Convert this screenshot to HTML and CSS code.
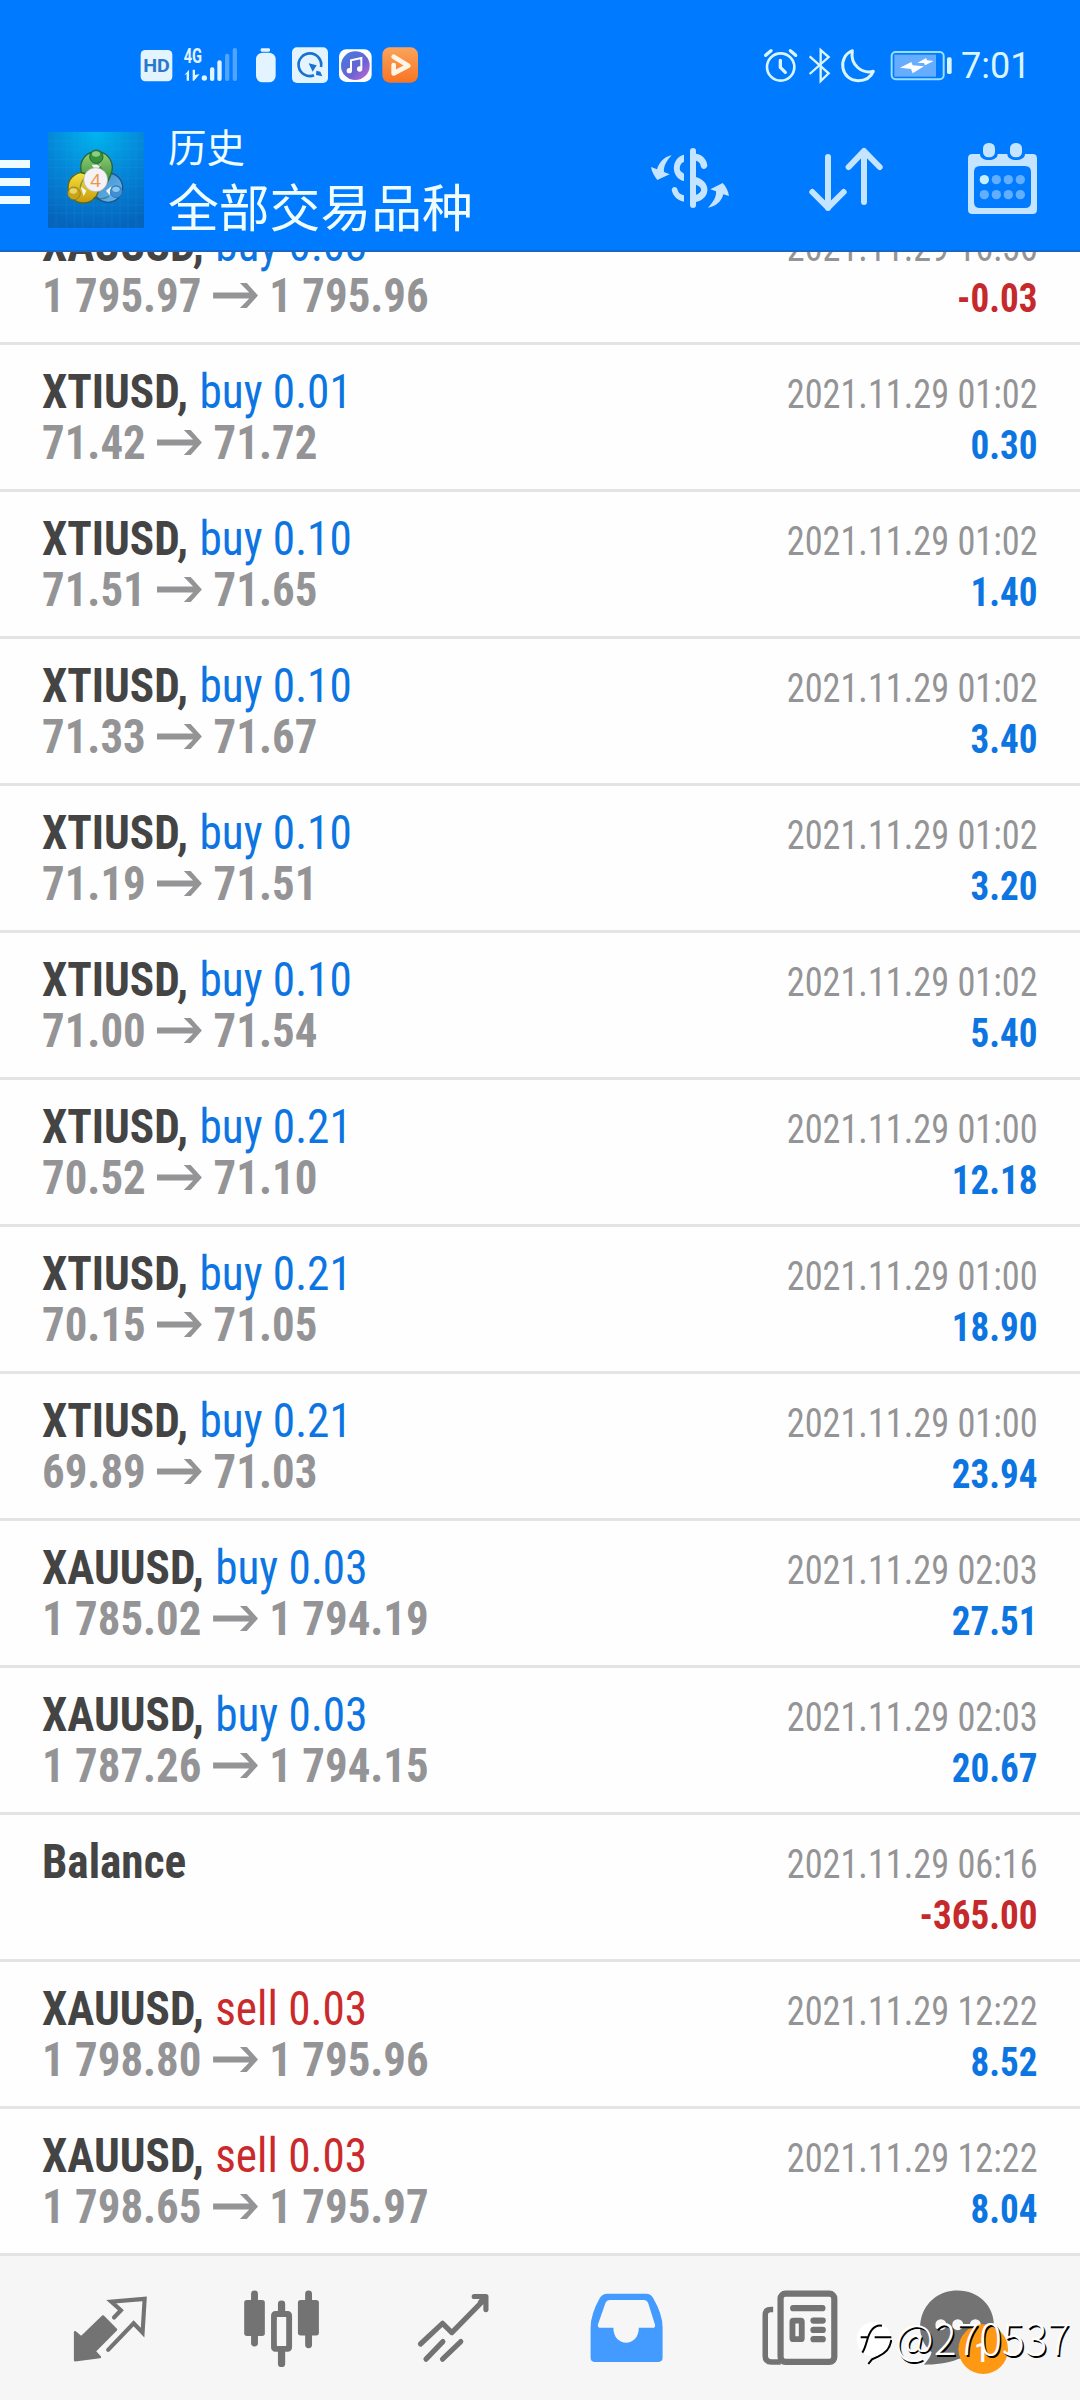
FILE: index.html
```html
<!DOCTYPE html>
<html lang="zh-CN">
<head>
<meta charset="utf-8">
<title>历史</title>
<link rel="stylesheet" href="styles.css">
</head>
<body>
<header class="header">
  <div class="status">
    <div class="status-group status-left">
      <svg width="42" height="70" viewBox="45 0 126 210"><rect x="62" y="60" width="95" height="94" rx="14" fill="#e4f4ff"/><text class="hd" x="109.500" y="126" text-anchor="middle" textLength="80" lengthAdjust="spacingAndGlyphs">HD</text></svg>
      <svg width="70" height="70" viewBox="171 0 210 210" fill="#e4f4ff"><text class="net" x="191" y="98" textLength="55" lengthAdjust="spacingAndGlyphs">4G</text><path d="M193 136l14-17v33h-7v-20zM218 119h7v16l14-3-17 20h-4z"/><circle cx="253" cy="144" r="8"/><rect x="270" y="112" width="13" height="41" rx="6"/><rect x="292" y="91" width="13" height="62" rx="6"/><rect x="315" y="71" width="13" height="82" rx="6" opacity=".35"/><rect x="338" y="54" width="13" height="99" rx="6" opacity=".35"/></svg>
      <svg width="37" height="70" viewBox="381 0 111 210" fill="#e4f4ff"><rect x="422" y="55" width="28" height="10" rx="4"/><rect x="408" y="68" width="59" height="89" rx="20"/></svg>
      <svg width="49" height="70" viewBox="492 0 147 210"><rect x="516" y="52" width="108" height="107" rx="15" fill="#e4f4ff"/><path d="M582 136A34 34 0 1 1 603 111" fill="none" stroke="#1972d2" stroke-width="8"/><path d="M566 100l24 6-12 19zM589 122l12 3 6 14-19-4z" fill="#1972d2"/></svg>
      <svg width="44" height="70" viewBox="639 0 132 210"><defs><linearGradient id="music" x2="1" y2="1"><stop stop-color="#407be0"/><stop offset=".6" stop-color="#6a63d3"/><stop offset="1" stop-color="#cf6ad5"/></linearGradient></defs><rect x="657" y="58" width="98" height="98" rx="22" fill="#fff"/><circle cx="706" cy="107" r="43" fill="url(#music)"/><path d="M693 122V91l31-7v31" fill="none" stroke="#fff" stroke-width="6"/><circle cx="688" cy="122" r="8" fill="#fff"/><circle cx="719" cy="117" r="8" fill="#fff"/></svg>
      <svg width="43" height="70" viewBox="771 0 129 210"><defs><linearGradient id="play" x2="0" y2="1"><stop stop-color="#f9a45c"/><stop offset="1" stop-color="#f97423"/></linearGradient></defs><rect x="787" y="52" width="107" height="106" rx="22" fill="url(#play)"/><path d="M821 80l44 27-44 23v-25" fill="none" stroke="#fff5e6" stroke-width="14" stroke-linejoin="round" stroke-linecap="round"/></svg>
    </div>
    <div class="status-group">
      <svg width="42" height="70" viewBox="60 0 126 210" fill="none" stroke="#d9f5ff" stroke-width="8" stroke-linecap="round"><circle cx="122" cy="111" r="41"/><path d="M121 91v21l15 15M77 76l16-14M151 62l16 14" stroke-width="10"/></svg>
      <svg width="35" height="70" viewBox="186 0 105 210" fill="none" stroke="#d9f5ff" stroke-width="7"><path d="M209 79l57 51-24 23V60l24 21-57 51"/></svg>
      <svg width="46" height="70" viewBox="291 0 138 210" fill="none" stroke="#d9f5ff" stroke-width="9" stroke-linejoin="round"><path d="M337 62C292 80 301 151 354 152C378 152 393 141 400 124C366 132 330 106 337 62Z"/></svg>
      <svg width="74" height="70" viewBox="429 0 222 210"><rect x="455" y="66" width="156" height="82" rx="12" fill="none" stroke="#9bddff" stroke-width="6"/><rect x="463" y="74" width="125" height="66" fill="#66adff"/><rect x="621" y="82" width="14" height="50" rx="5" fill="#d9f5ff"/><path d="M480 113l34-17 4 10 34 3-34 21-5-13zM532 99l26-15 3 7 20 2-26 13-3-7z" fill="#fff"/></svg>
      <span class="time">7:01</span>
    </div>
  </div>
  <div class="appbar">
    <div class="burger"><i></i><i></i><i></i></div>
    <svg class="logo" width="96" height="96" viewBox="24 21 288 288">
      <defs>
        <radialGradient id="bg" cx=".5" cy="0" r="1"><stop stop-color="#00b5ee"/><stop offset=".5" stop-color="#0587d8"/><stop offset="1" stop-color="#0565bd"/></radialGradient>
        <linearGradient id="gr" x2="0" y2="1"><stop stop-color="#9ad07a"/><stop offset="1" stop-color="#2f8c33"/></linearGradient>
        <linearGradient id="ye" x2="0" y2="1"><stop stop-color="#f5e33c"/><stop offset="1" stop-color="#c99a0c"/></linearGradient>
        <linearGradient id="bl" x2="1" y2="1"><stop stop-color="#3b88c8"/><stop offset="1" stop-color="#6cbcf0"/></linearGradient>
      </defs>
      <rect x="24" y="21" width="288" height="288" fill="url(#bg)"/>
      <path d="M48 21v288M80 21v288M104 21v288M128 21v288M160 21v288M192 21v288M216 21v288M240 21v288M264 21v288M288 21v288M24 48h288M24 72h288M24 104h288M24 128h288M24 160h288M24 184h288M24 216h288M24 240h288M24 264h288" stroke="#35b4ee" stroke-opacity=".2" stroke-width="2"/>
      <circle cx="204" cy="188" r="44" fill="url(#bl)" stroke="#20538a" stroke-width="4"/>
      <circle cx="130" cy="188" r="46" fill="url(#ye)" stroke="#5d681f" stroke-width="4"/>
      <path d="M124 143C116 107 137 80 170 80C205 80 227 115 212 151L199 178L140 147Z" fill="url(#gr)" stroke="#256437" stroke-width="4"/>
      <path d="M155 119l28 0-9 12h-11zM122 184l17 13-8 17zM214 184l-16 13 11 14z" fill="#eef7f4"/>
      <path d="M171 115q22 18 23 46M120 190q4-28 24-38M160 218q23 9 47-4" fill="none" stroke="#20562e" stroke-opacity=".45" stroke-width="4"/>
      <circle cx="169" cy="95" r="20" fill="#34943b" stroke="#256437" stroke-width="3"/><ellipse cx="168" cy="87" rx="12" ry="8" fill="#8fcb83"/>
      <circle cx="102" cy="205" r="19" fill="#c9a419" stroke="#77721d" stroke-width="2"/><ellipse cx="100" cy="198" rx="11" ry="8" fill="#ead56a"/>
      <circle cx="229" cy="200" r="18" fill="#3f8fd3" stroke="#2768a6" stroke-width="2"/><ellipse cx="228" cy="193" rx="11" ry="8" fill="#8cc6ee"/>
      <circle cx="167" cy="164" r="36" fill="#f4f2f4" stroke="#a8aa9b" stroke-width="2"/>
      <text class="four" x="167" y="185" text-anchor="middle">4</text>
    </svg>
    <div class="titles"><div class="sub">历史</div><div class="main">全部交易品种</div></div>
    <div class="actions">
      <svg width="84" height="84" viewBox="84 81 252 252" fill="#c5e4ff"><path d="M155 136C141 151 130 168 132 186L149 193 112 210C103 199 95 185 93 171L111 178C117 158 132 140 155 136ZM264 293C278 279 290 261 288 244L271 238 308 219C317 228 325 243 327 258L310 253C305 273 288 290 264 293Z"/><rect x="210" y="114" width="18" height="180" rx="9"/><path d="M192 134V155C181 159 176 174 182 184L192 191V213C153 205 150 145 192 134ZM228 131C249 134 262 151 262 168C257 181 245 179 242 168C242 160 236 154 228 152ZM228 201C274 214 274 266 228 276V254C246 249 251 232 228 224ZM192 275C170 270 158 256 155 239C159 227 171 230 173 240C175 249 181 253 192 256Z"/></svg>
      <svg width="84" height="84" viewBox="552 81 252 252" fill="none" stroke="#c5e4ff" stroke-width="18" stroke-linecap="round" stroke-linejoin="round"><path d="M624 141v153M577 246l47 47 47-47M732 276V123M686 171l46-48 47 48"/></svg>
      <svg width="84" height="84" viewBox="1020 81 252 252"><path d="M1057 132H1080C1080 156 1133 156 1133 132H1162C1162 156 1215 156 1215 132H1238Q1251 132 1251 145V299Q1251 312 1238 312H1057Q1044 312 1044 299V145Q1044 132 1057 132ZM1080 168Q1062 168 1062 186V276Q1062 294 1080 294H1215Q1233 294 1233 276V186Q1233 168 1215 168Z" fill="#c5e4ff" fill-rule="evenodd"/><g fill="#c5e4ff"><rect x="1089" y="99" width="36" height="43" rx="16"/><rect x="1170" y="99" width="36" height="43" rx="16"/></g><g fill="#62afff"><circle cx="1093" cy="209" r="14" fill="#c5efff"/><circle cx="1129" cy="209" r="14"/><circle cx="1165" cy="209" r="14"/><circle cx="1201" cy="209" r="14"/><circle cx="1093" cy="254" r="14"/><circle cx="1129" cy="254" r="14"/><circle cx="1165" cy="254" r="14"/><circle cx="1201" cy="254" r="14"/></g></svg>
    </div>
  </div>
</header>
<main class="list" id="list"></main>
<nav class="nav">
  <svg width="172" height="144" viewBox="69.700 46.500 499.400 418.100"><g fill="#737373" stroke="#737373" stroke-linejoin="round"><path d="M218 268l18 15 63-61 38 38-62 63 15 17-72 9z" stroke-width="7"/></g><path d="M331 225l20-21-28-25 97-8-6 98-26-27-74 77" fill="none" stroke="#737373" stroke-width="12" stroke-linecap="round"/></svg>
  <svg width="172" height="144" viewBox="569.100 46.500 499.400 418.100" fill="#737373"><rect x="709" y="174" width="60" height="105" rx="8"/><rect x="729" y="147" width="20" height="162" rx="10"/><rect x="865" y="174" width="61" height="103" rx="8"/><rect x="886" y="147" width="20" height="167" rx="10"/><rect x="807" y="176" width="21" height="40" rx="10"/><rect x="807" y="315" width="21" height="54" rx="10"/><rect x="795.500" y="215" width="44" height="101" rx="4" fill="#f6f6f6" stroke="#737373" stroke-width="17"/><rect x="804" y="224" width="26" height="83" rx="10" fill="#f6f6f6"/></svg>
  <svg width="172" height="144" viewBox="1068.600 46.500 499.400 418.100" fill="none" stroke="#737373" stroke-width="15" stroke-linecap="round" stroke-linejoin="round"><path d="M1221 302l64-60 27 27 96-98M1377 164h34v38M1405 170l-10 10M1237 346l49-51M1285 346l53-51"/></svg>
  <svg width="172" height="144" viewBox="0 46.500 499.400 418.100"><path d="M195 156H309Q321 156 328 168Q356 216 356 254V342Q356 354 344 354H158Q147 354 147 342V254Q147 216 174 168Q182 156 195 156ZM203 174Q194 174 190 183L168 246Q167 255 176 255H213C213 313 287 313 287 255H327Q336 255 334 246L314 183Q310 174 301 174Z" fill="#439aff" fill-rule="evenodd"/></svg>
  <svg width="172" height="144" viewBox="499.400 46.500 499.400 418.100" fill="none" stroke="#737373"><path d="M677 202h-7q-16 0-16 16v118q0 18 18 18h27" stroke-width="16"/><rect x="698.500" y="156" width="156" height="198" rx="14" stroke-width="18"/><path d="M735 198h85M794 234h27M794 261h27M794 288h27" stroke-width="18" stroke-linecap="round"/><rect x="733" y="234" width="27" height="54" rx="3" stroke-width="17"/></svg>
  <svg width="172" height="144" viewBox="998.900 46.500 499.400 418.100"><path d="M1212 147C1275 147 1318 192 1318 248C1318 303 1276 345 1216 345C1184 360 1145 362 1115 362C1128 347 1135 337 1137 326C1070 267 1110 147 1212 147Z" fill="#737373"/><g fill="#f6f6f6"><circle cx="1164" cy="246" r="16"/><circle cx="1213" cy="246" r="16"/><circle cx="1264" cy="246" r="16"/></g><circle cx="1287" cy="317" r="72" fill="#ff9914"/><text class="badge" x="1283" y="353" text-anchor="middle">1</text></svg>
  <div class="watermark">
    <svg width="36" height="44" viewBox="48 130 108 132"><circle cx="102" cy="182" r="52" fill="#fff"/><path d="M62 176h20M104 176h50M67 222c14-21 13-50 29-69q12-15 30-12M154 184c-5 28-17 39-40 50l-18 8-11 14" fill="none" stroke="#000" stroke-width="6"/></svg><span>@270537</span>
  </div>
</nav>
<script src="history.js"></script>
</body>
</html>
```
FILE: history.js
```js
const deals = [
  ['XAUUSD', 'buy', '0.03', '1 795.97', '1 795.96', '2021.11.29 16:56', '-0.03'],
  ['XTIUSD', 'buy', '0.01', '71.42', '71.72', '2021.11.29 01:02', '0.30'],
  ['XTIUSD', 'buy', '0.10', '71.51', '71.65', '2021.11.29 01:02', '1.40'],
  ['XTIUSD', 'buy', '0.10', '71.33', '71.67', '2021.11.29 01:02', '3.40'],
  ['XTIUSD', 'buy', '0.10', '71.19', '71.51', '2021.11.29 01:02', '3.20'],
  ['XTIUSD', 'buy', '0.10', '71.00', '71.54', '2021.11.29 01:02', '5.40'],
  ['XTIUSD', 'buy', '0.21', '70.52', '71.10', '2021.11.29 01:00', '12.18'],
  ['XTIUSD', 'buy', '0.21', '70.15', '71.05', '2021.11.29 01:00', '18.90'],
  ['XTIUSD', 'buy', '0.21', '69.89', '71.03', '2021.11.29 01:00', '23.94'],
  ['XAUUSD', 'buy', '0.03', '1 785.02', '1 794.19', '2021.11.29 02:03', '27.51'],
  ['XAUUSD', 'buy', '0.03', '1 787.26', '1 794.15', '2021.11.29 02:03', '20.67'],
  ['Balance', '', '', '', '', '2021.11.29 06:16', '-365.00'],
  ['XAUUSD', 'sell', '0.03', '1 798.80', '1 795.96', '2021.11.29 12:22', '8.52'],
  ['XAUUSD', 'sell', '0.03', '1 798.65', '1 795.97', '2021.11.29 12:22', '8.04']
];
const arrow = '<svg class="arrow" width="48" height="25" viewBox="0 0 46 25" preserveAspectRatio="none"><path d="M0 9.500H37L27.500 0H34.500L46 12.500L34.500 25H27.500L37 15.500H0Z" fill="#949496"/></svg>';
document.getElementById('list').innerHTML = deals.map(([symbol, side, lots, open, close, date, profit]) => `
  <article class="row">
    <div class="deal">
      <div class="title"><b class="symbol">${symbol}${side ? ',' : ''}</b>${side ? ` <span class="order ${side}">${side} ${lots}</span>` : ''}</div>
      ${side ? `<div class="prices"><span>${open}</span>${arrow}<span>${close}</span></div>` : ''}
    </div>
    <div class="result">
      <div class="date">${date}</div>
      <div class="profit ${profit.startsWith('-') ? 'loss' : ''}">${profit}</div>
    </div>
  </article>`).join('');
```
FILE: styles.css
```css
* { box-sizing: border-box; }
body { margin: 0; width: 1080px; height: 2400px; overflow: hidden; display: flex; flex-direction: column; background: #fefefe; font-family: "Roboto Condensed", Roboto, "Noto Sans CJK SC", sans-serif; }
svg { display: block; flex: none; }
.header { height: 252px; flex: none; background: #007aff; border-bottom: 2px solid #1767c8; color: #f0fdff; }
.status { height: 110px; padding: 30px 0 0; display: flex; justify-content: space-between; }
.status-group { display: flex; height: 70px; }
.status-left { padding-left: 135px; }
.time { width: 123px; padding: 11px 0 0 4px; font: 36px/51px Roboto, sans-serif; color: #d9f5ff; }
.hd { font: 700 55px Roboto, sans-serif; fill: #2a78cc; }
.net { font: 700 60px Roboto, sans-serif; }
.appbar { height: 140px; display: flex; align-items: flex-start; }
.burger { width: 30px; margin: 50px 18px 0 0; display: flex; flex-direction: column; gap: 10px; }
.burger i { height: 8px; background: #effcff; }
.logo { margin-top: 22px; }
.four { font: 500 56px "Open Sans", sans-serif; fill: #f0924a; }
.titles { padding: 12px 0 0 24px; font-family: "Noto Sans CJK SC", sans-serif; }
.sub { font-size: 38.500px; line-height: 46px; }
.main { font-size: 50.800px; line-height: 74px; }
.actions { display: flex; gap: 72px; margin: 27px 36px 0 auto; }
.list { height: 2004px; flex: none; display: flex; flex-direction: column; justify-content: flex-end; overflow: hidden; }
.row { height: 147px; flex: none; display: flex; justify-content: space-between; padding: 0 42px; border-bottom: 3px solid #e4e4e4; }
.deal { padding-top: 21px; font-size: 48px; line-height: 51px; white-space: nowrap; }
.title { transform: scaleX(.942); transform-origin: left; }
.prices { transform: scaleX(.935); transform-origin: left; }
.symbol { color: #444; }
.order { display: inline-block; margin-left: 1px; }
.buy { color: #0d75e2; }
.sell { color: #cb2a2c; }
.prices { display: flex; align-items: center; color: #949496; font-weight: 700; }
.arrow { margin: -1px 12px 0 12.500px; }
.result { padding-top: 24px; font-size: 40px; line-height: 51px; text-align: right; white-space: nowrap; }
.date { color: #949496; transform: scaleX(.907); transform-origin: right; }
.profit { color: #0d75e2; font-weight: 700; transform: scaleX(.928); transform-origin: right; }
.profit.loss { color: #c5292b; }
.nav { position: relative; height: 144px; flex: none; display: flex; padding-left: 24px; background: #f6f6f6; overflow: hidden; }
.badge { font: 500 78px Roboto, sans-serif; fill: #fff; }
.watermark { position: absolute; left: 856px; top: 59px; display: flex; gap: 3px; color: #fff; font: 300 42.500px/44px "Noto Sans CJK SC", sans-serif; text-shadow: 1.500px 1.500px 0 #000; white-space: nowrap; }
.watermark svg { margin-top: 7px; }
```
